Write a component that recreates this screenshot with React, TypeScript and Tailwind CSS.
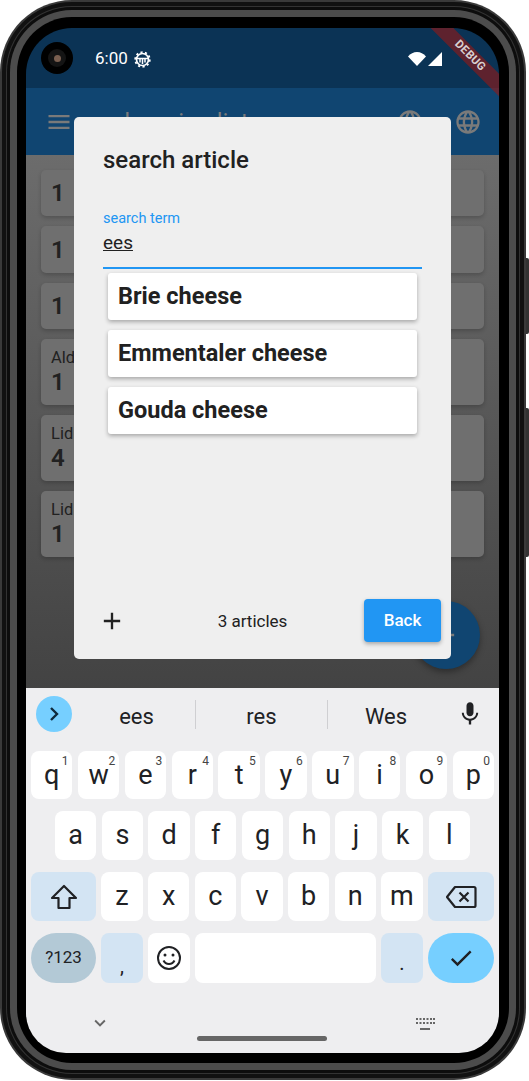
import { MdAdd, MdCheck, MdKeyboardArrowDown, MdLanguage, MdMenu, MdMic } from "react-icons/md";

const rowOne = [
  ["q", "1"],
  ["w", "2"],
  ["e", "3"],
  ["r", "4"],
  ["t", "5"],
  ["y", "6"],
  ["u", "7"],
  ["i", "8"],
  ["o", "9"],
  ["p", "0"],
];
const rowTwo = ["a", "s", "d", "f", "g", "h", "j", "k", "l"];
const rowThree = ["z", "x", "c", "v", "b", "n", "m"];
const articles = ["Brie cheese", "Emmentaler cheese", "Gouda cheese"];
const shoppingItems = [
  { amount: "1", height: "h-[46px]" },
  { amount: "1", height: "h-[47px]" },
  { amount: "1", height: "h-[46px]" },
  { shop: "Aldi", amount: "1", height: "h-[66px]" },
  { shop: "Lidl", amount: "4", height: "h-[66px]" },
  { shop: "Lidl", amount: "1", height: "h-[66px]" },
];

function Key({ label, hint }: { label: string; hint?: string }) {
  return (
    <div className="relative flex flex-1 items-center justify-center rounded-[8px] bg-white text-[27px] leading-none text-[#202124]">
      {label}
      {hint && <span className="absolute right-[4px] top-[3px] text-[12px] leading-[14px] text-[#444]">{hint}</span>}
    </div>
  );
}

function GearIcon() {
  return (
    <svg className="block" width="17" height="17" viewBox="0 0 17 17" fill="none" stroke="white">
      <circle cx="8.5" cy="8.5" r="6" strokeWidth="1.7" />
      <circle cx="8.5" cy="8.5" r="7.3" strokeWidth="1.8" strokeDasharray="2.2 2.38" />
      <path d="M3 7.5h11M6 8v3.5M11 8v3.5M8.5 8v5" strokeWidth="1.5" />
    </svg>
  );
}

function Keyboard() {
  return (
    <div className="flex h-[365px] shrink-0 flex-col bg-[#eeeef0] px-[5px] pt-[8px]">
      <div className="flex h-[36px] items-center text-[22px] text-[#202124]">
        <div className="ml-[5px] flex size-[36px] items-center justify-center rounded-full bg-[#76cfff]">
          <svg width="12" height="16" viewBox="0 0 12 16" fill="none" stroke="#0f2a3d" strokeWidth="2.4">
            <path d="M3 2l6 6-6 6" />
          </svg>
        </div>
        <div className="flex w-[123px] justify-center pl-[6px] pt-[4px]">ees</div>
        <div className="h-[29px] w-px bg-[#cfcfd2]" />
        <div className="flex w-[131px] justify-center pt-[4px]">res</div>
        <div className="h-[29px] w-px bg-[#cfcfd2]" />
        <div className="flex w-[116px] justify-center pt-[4px]">Wes</div>
        <MdMic className="ml-[12px] text-[#202124]" size={28} />
      </div>
      <div className="mt-[19px] flex flex-col gap-[12px]">
        <div className="flex h-[48px] gap-[5.4px]">
          {rowOne.map(([label, hint]) => (
            <Key key={label} label={label} hint={hint} />
          ))}
        </div>
        <div className="flex h-[49px] gap-[5.4px] px-[24px]">
          {rowTwo.map((label) => (
            <Key key={label} label={label} />
          ))}
        </div>
        <div className="flex h-[49px] gap-[5.4px]">
          <div className="flex w-[65px] items-center justify-center rounded-[8px] bg-[#d3e4f3]">
            <svg width="28" height="26" viewBox="0 0 28 26" fill="none" stroke="#202124" strokeWidth="2.2" strokeLinejoin="round">
              <path d="M14 2L2 14h6.5v10h11V14H26z" />
            </svg>
          </div>
          {rowThree.map((label) => (
            <Key key={label} label={label} />
          ))}
          <div className="flex w-[66px] items-center justify-center rounded-[8px] bg-[#d3e4f3]">
            <svg width="32" height="24" viewBox="0 0 32 24" fill="none" stroke="#202124" strokeWidth="2.2" strokeLinejoin="round">
              <path d="M10 2h19a1.5 1.5 0 0 1 1.5 1.5v17A1.5 1.5 0 0 1 29 22H10L2 12z" />
              <path d="M14.5 7.5l9 9M23.5 7.5l-9 9" />
            </svg>
          </div>
        </div>
        <div className="flex h-[50px] gap-[5.4px]">
          <div className="flex w-[65px] items-center justify-center rounded-[25px] bg-[#b3c9d6] text-[17px] text-[#202124]">?123</div>
          <div className="flex w-[41.4px] items-end justify-center rounded-[8px] bg-[#d3e4f3] pb-[7px] text-[20px] leading-none text-[#202124]">,</div>
          <div className="flex w-[41.4px] items-center justify-center rounded-[8px] bg-white">
            <svg width="26" height="26" viewBox="0 0 26 26" fill="none" stroke="#202124" strokeWidth="2">
              <circle cx="13" cy="13" r="11" />
              <path d="M7.5 15.5c1.2 2.4 3 3.5 5.5 3.5s4.300-1.100 5.500-3.500" />
              <circle cx="9" cy="10" r="1.500" fill="#202124" stroke="none" />
              <circle cx="17" cy="10" r="1.500" fill="#202124" stroke="none" />
            </svg>
          </div>
          <div className="flex-1 rounded-[8px] bg-white" />
          <div className="flex w-[41.4px] items-end justify-center rounded-[8px] bg-[#d3e4f3] pb-[10px] text-[20px] leading-none text-[#202124]">.</div>
          <div className="flex w-[66px] items-center justify-center rounded-[25px] bg-[#76cfff]">
            <MdCheck className="text-[#202124]" size={28} />
          </div>
        </div>
      </div>
      <div className="relative flex flex-1 items-start justify-between pl-[58px] pr-[59px] pt-[29px]">
        <MdKeyboardArrowDown className="text-[#666]" size={22} />
        <svg className="mt-[5px]" width="20" height="14" viewBox="0 0 20 14" fill="#666">
          <path d="M1 1h2v2H1zM4.500 1h2v2h-2zM8 1h2v2H8zM11.500 1h2v2h-2zM15 1h2v2h-2zM18 1h2v2h-2zM1 5h2v2H1zM4.500 5h2v2h-2zM8 5h2v2H8zM11.500 5h2v2h-2zM15 5h2v2h-2zM18 5h2v2h-2zM5 11h10v2H5z" />
        </svg>
        <div className="absolute left-[166px] top-[53px] h-[5px] w-[130px] rounded-full bg-[#666]" />
      </div>
    </div>
  );
}

function SearchDialog() {
  return (
    <div className="absolute left-[48px] top-[89px] flex h-[542px] w-[377px] flex-col rounded-[5px] bg-[#efefef] px-[29px] pb-[17px] pt-[28px] text-[#212121]">
      <div className="text-[24px] font-medium leading-[30px]">search article</div>
      <div className="mt-[35px] text-[14.500px] leading-[18px] text-[#2196f3]">search term</div>
      <div className="mt-[3px] h-[24px] text-[19px] leading-[24px] underline">ees</div>
      <div className="mt-[12px] h-[2px] w-[319px] bg-[#2196f3]" />
      <div className="mt-[4px] flex flex-col gap-[10px] px-[5px] pr-[5px]">
        {articles.map((article) => (
          <div
            key={article}
            className="flex h-[47px] w-[309px] items-center rounded-[3px] bg-white pl-[10px] pt-px text-[23.500px] font-bold shadow-[0_2px_4px_rgba(0,0,0,0.3)]"
          >
            {article}
          </div>
        ))}
      </div>
      <div className="mt-auto flex items-center justify-between">
        <MdAdd className="-ml-[5px]" size={28} />
        <span className="ml-[15px] pt-[2px] text-[17px]">3 articles</span>
        <div className="-mr-[19px] flex h-[43px] w-[77px] items-center justify-center rounded-[4px] bg-[#2196f3] text-[17px] font-medium text-white shadow-[0_2px_4px_rgba(0,0,0,0.3)]">
          Back
        </div>
      </div>
    </div>
  );
}

export default function App() {
  return (
    <div className="h-[1081px] w-[529px] overflow-hidden bg-white font-['Roboto',sans-serif]">
      <div className="relative h-[1080px] w-[526px]">
        <div className="absolute -right-[3px] top-[258px] h-[76px] w-[3px] rounded-r-[2px] bg-[#333]" />
        <div className="absolute -right-[3px] top-[408px] h-[149px] w-[3px] rounded-r-[2px] bg-[#333]" />
        <div className="h-full rounded-[72px] bg-[#3a3a3a] p-[2px]">
          <div className="h-full rounded-[70px] bg-[#111] p-[4px]">
            <div className="h-full rounded-[66px] bg-[#333] p-px">
              <div className="h-full rounded-[65px] bg-[#0d0d0d] p-[3px]">
                <div className="h-full rounded-[62px] bg-[#4c4c4c] p-[7px]">
                  <div className="flex h-full rounded-[55px] bg-black pb-[10px] pl-[9px] pr-[10px] pt-[11px]">
                    <div className="relative flex w-[473px] flex-col overflow-hidden rounded-b-[40px] rounded-t-[46px]">
                      <div className="flex h-[60px] shrink-0 items-center bg-[#0b3355] pt-[2px] text-white">
                        <span className="ml-[69px] text-[17px]">6:00</span>
                        <span className="ml-[6px]">
                          <GearIcon />
                        </span>
                        <svg className="ml-auto" width="18" height="14" viewBox="0 0 18 14" fill="white">
                          <path d="M0 4.500C2.500 1.700 5.500 0 9 0s6.500 1.700 9 4.500L9 14z" />
                        </svg>
                        <svg className="ml-[2px] mr-[57px]" width="14" height="14" viewBox="0 0 14 14" fill="white">
                          <path d="M14 0v14H0z" />
                        </svg>
                      </div>
                      <div className="flex h-[67px] shrink-0 items-center bg-[#104571] pl-[22px] pr-[17px] text-[#7a7a7a]">
                        <MdMenu className="-ml-[3px]" size={28} />
                        <span className="ml-[39px] text-[24px]">shopping list</span>
                        <MdLanguage className="ml-auto mr-[30px]" size={28} />
                        <MdLanguage size={28} />
                      </div>
                      <div className="flex flex-1 flex-col gap-[10px] bg-gradient-to-b from-[#6c6c6c] to-[#434343] px-[15px] pt-[15px]">
                        {shoppingItems.map((item, index) => (
                          <div
                            key={index}
                            className={`${item.height} flex flex-col justify-center rounded-[5px] bg-[#6f6f6f] pl-[10px] text-[#212121] shadow-[0_2px_4px_rgba(0,0,0,0.2)]`}
                          >
                            {item.shop && <span className="text-[16.500px] leading-[20px]">{item.shop}</span>}
                            <span className="text-[24px] font-semibold leading-[28px]">{item.amount}</span>
                          </div>
                        ))}
                      </div>
                      <Keyboard />
                      <div className="absolute left-[386px] top-[573px] flex size-[68px] items-center justify-center rounded-full bg-[#104571] shadow-[0_3px_6px_rgba(0,0,0,0.35)]">
                        <MdAdd className="text-[#7a7a7a]" size={28} />
                      </div>
                      <SearchDialog />
                      <div className="absolute left-[15px] top-[14px] flex size-[32px] items-center justify-center rounded-full bg-black">
                        <div className="flex size-[18px] items-center justify-center rounded-full bg-[#141414]">
                          <div className="size-[7px] rounded-full bg-[#7a5f50]" />
                        </div>
                      </div>
                      <div className="absolute left-[384px] top-[20px] flex h-[16px] w-[120px] rotate-45 items-center justify-center bg-[#8c1a1a]/65 text-[11.500px] font-bold tracking-[0.3px] text-[#d9d0d0]">
                        DEBUG
                      </div>
                    </div>
                  </div>
                </div>
              </div>
            </div>
          </div>
        </div>
      </div>
    </div>
  );
}
